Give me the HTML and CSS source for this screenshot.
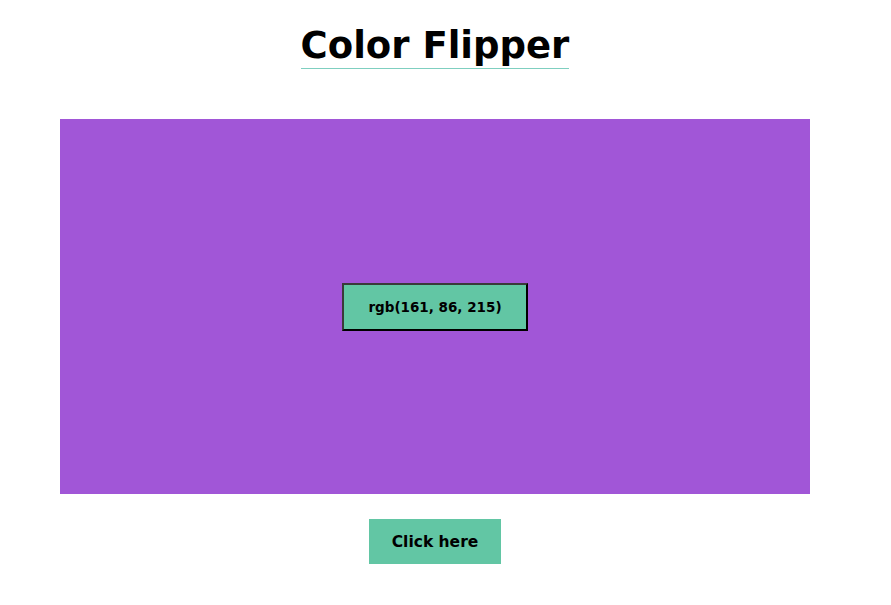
FILE: index.html
```html
<!DOCTYPE html>
<html>
<head>
<meta charset="utf-8">
<link rel="stylesheet" href="styles.css">
</head>
<body>
<main class="page">
  <header class="head">
    <h1 class="title">Color Flipper</h1>
  </header>
  <section class="canvas">
    <div class="code">rgb(161, 86, 215)</div>
  </section>
  <div class="actions">
    <button class="btn">Click here</button>
  </div>
</main>
</body>
</html>
```
FILE: styles.css
```css
html, body {
  margin: 0;
  padding: 0;
  background: #fff;
}
.page {
  width: 870px;
  display: flex;
  flex-direction: column;
  align-items: center;
  font-family: "DejaVu Sans", "Open Sans", sans-serif;
  color: #000;
}
.head {
  padding-top: 24px;
  height: 119px;
  box-sizing: border-box;
}
.title {
  margin: 0;
  font-size: 37px;
  font-weight: 700;
  line-height: 44px;
  border-bottom: 1px solid #7fcfc0;
  letter-spacing: 0;
}
.canvas {
  width: 750px;
  height: 375px;
  background: rgb(161, 86, 215);
  display: flex;
  align-items: center;
  justify-content: center;
}
.code {
  width: 186px;
  height: 48px;
  box-sizing: border-box;
  background: #62c6a4;
  border: 2px solid #3a3a3a;
  border-right-color: #000;
  border-bottom-color: #000;
  display: flex;
  align-items: center;
  justify-content: center;
  font-size: 13.5px;
  font-weight: 700;
}
.actions {
  padding-top: 25px;
}
.btn {
  width: 132px;
  height: 45px;
  background: #62c6a4;
  border: none;
  font-family: "DejaVu Sans", "Open Sans", sans-serif;
  font-size: 15.5px;
  font-weight: 700;
  color: #000;
  padding: 0;
}
```
